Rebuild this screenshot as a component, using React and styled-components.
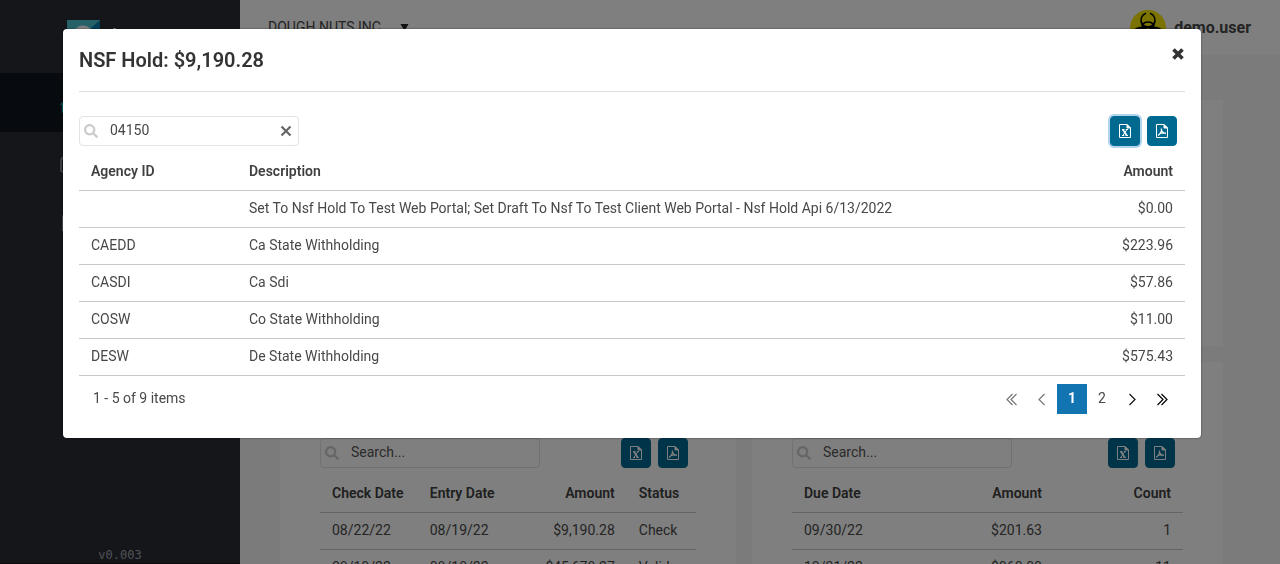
import React from "react";
import styled, { createGlobalStyle, css } from "styled-components";
import { FaSearch } from "react-icons/fa";

const GlobalStyle = createGlobalStyle`
  *, *::before, *::after { box-sizing: border-box; }
  body {
    margin: 0;
    font-family: Roboto, "Liberation Sans", sans-serif;
    font-size: 14px;
    line-height: 20px;
    color: #484848;
    background: #f6f6f6;
  }
  button, input { font: inherit; color: inherit; }
`;

const Shell = styled.div`
  display: flex;
  height: 100vh;
  overflow: hidden;
`;

const Sidebar = styled.aside`
  flex: none;
  width: 240px;
  display: flex;
  flex-direction: column;
  background: #2a2c34;
  color: #a0a4ac;
  border-bottom: 1px solid #1c0f18;
`;

const Brand = styled.div`
  display: flex;
  gap: 11px;
  height: 73px;
  padding: 20px 0 0 67px;
  color: #fff;
  font-size: 24px;
  line-height: 32px;
`;

const Nav = styled.nav`
  flex: 1;
  display: flex;
  flex-direction: column;
`;

const NavLink = styled.a`
  display: flex;
  align-items: center;
  height: 59px;
  padding: 4px 0 0 60px;
  text-decoration: none;
  color: ${(p) => (p.$active ? "#00b5c8" : "#a0a4ac")};
  background: ${(p) => (p.$active ? "#0e141e" : "transparent")};
`;

const Version = styled.footer`
  text-align: center;
  font: 12px/16px "DejaVu Sans Mono", monospace;
`;

const Content = styled.div`
  flex: 1;
  min-width: 0;
`;

const TopBar = styled.header`
  display: flex;
  align-items: center;
  justify-content: space-between;
  height: 55px;
  padding: 0 29px 0 28px;
  background: #fff;
`;

const Company = styled.button`
  display: flex;
  align-items: center;
  gap: 15px;
  padding: 0 0 2px;
  border: 0;
  background: none;
`;

const User = styled.div`
  display: flex;
  align-items: center;
  gap: 8px;
  font-size: 16px;
  font-weight: 700;
`;

const Avatar = styled.span`
  display: grid;
  place-items: center;
  width: 36px;
  height: 36px;
  border-radius: 50%;
  background: #f5e600;
  color: #000;
`;

const Main = styled.main`
  display: grid;
  grid-template-columns: 456fr 471fr;
  gap: 16px;
  padding: 45px 57px 0 40px;
`;

const Panel = styled.section`
  height: ${(p) => (p.$wide ? "246px" : "400px")};
  grid-column: ${(p) => (p.$wide ? "1 / -1" : "auto")};
  padding: 76px 40px 0;
  background: #fff;
`;

const Toolbar = styled.div`
  display: flex;
  align-items: center;
  justify-content: space-between;
  padding-right: 8px;
`;

const SearchBox = styled.label`
  display: flex;
  align-items: center;
  width: 220px;
  height: 30px;
  padding: 0 6px 0 4px;
  border: 1px solid #e3e3e3;
  border-radius: 4px;
  color: #ccc;
`;

const SearchInput = styled.input`
  flex: 1;
  min-width: 0;
  height: 28px;
  padding: 0 0 2px;
  margin-left: 12px;
  border: 0;
  outline: 0;
  background: none;
  color: #484848;
  &::placeholder { color: #555; opacity: 1; }
`;

const IconButton = styled.button`
  display: grid;
  place-items: center;
  padding: 0;
  border: 0;
  background: none;
  color: ${(p) => p.$color || "#666"};
`;

const Exports = styled.div`
  display: flex;
  gap: 7px;
`;

const ExportButton = styled.button`
  display: grid;
  place-items: center;
  width: 30px;
  height: 30px;
  padding: 0;
  border: 1px solid #006b95;
  border-radius: 4px;
  background: #006990;
  color: #fff;
  ${(p) => p.$focused && css`box-shadow: 0 0 0 2px #b3d4ea;`}
`;

const Table = styled.table`
  width: 100%;
  margin-top: 7px;
  border-collapse: collapse;
  table-layout: fixed;
`;

const Cell = styled.td`
  height: 37px;
  padding: 0 12px 2px;
  border-bottom: 1px solid #c8c8c8;
  text-align: ${(p) => (p.$right ? "right" : "left")};
  white-space: nowrap;
`;

const HeadCell = styled(Cell).attrs({ as: "th", scope: "col" })`
  padding: 0 12px;
  font-weight: 600;
  color: #404040;
`;

const Overlay = styled.div`
  position: fixed;
  inset: 0;
  padding: 29px 79px 0 63px;
  background: rgba(0, 0, 0, 0.5);
`;

const Dialog = styled.section`
  padding: 0 16px 24px;
  border-radius: 4px;
  background: #fff;
  box-shadow: 0 0 2px rgba(0, 0, 0, 0.6);
`;

const DialogHead = styled.header`
  display: flex;
  align-items: flex-start;
  justify-content: space-between;
  height: 63px;
  padding-top: 18px;
  margin-bottom: 24px;
  border-bottom: 1px solid #ddd;
`;

const Title = styled.h2`
  margin: 0;
  font-size: 20px;
  line-height: 26px;
  font-weight: 600;
  color: #333;
`;

const Pager = styled.footer`
  display: flex;
  align-items: flex-start;
  justify-content: space-between;
  padding: 8px 8px 0 14px;
  line-height: 28px;
`;

const Pages = styled.nav`
  display: flex;
`;

const PageButton = styled.button`
  display: flex;
  justify-content: center;
  width: 30px;
  height: 30px;
  padding: 0;
  border: 0;
  color: ${(p) => (p.$current ? "#fff" : p.$color || "#484848")};
  font-weight: ${(p) => (p.$current ? 700 : 400)};
  background: ${(p) => (p.$current ? "#1274b0" : "none")};
  svg { align-self: center; }
`;

const Arrow = ({ double, flip }) => (
  <svg width="14" height="14" viewBox="0 0 14 14" fill="none" stroke="currentColor" strokeWidth="1.200" aria-hidden="true">
    <g transform={flip ? "matrix(-1 0 0 1 14 0)" : undefined}>
      {double ? <path d="M2.500 2l5.500 5.500L2.500 13M6.500 2l5.500 5.500L6.500 13" /> : <path d="M4.500 2L10 7.500 4.500 13" />}
    </g>
  </svg>
);

const Logo = () => (
  <svg width="33" height="33" viewBox="0 0 33 33" aria-hidden="true">
    <path fill="#4cc3cf" d="M0 0h33v33H0z" />
    <path fill="#0b7fae" d="M33 0v33H8L24 8z" />
    <circle cx="16" cy="16" r="8" fill="none" stroke="#fff" strokeWidth="5" />
  </svg>
);

const NavIcon = ({ d }) => (
  <svg width="18" height="18" viewBox="0 0 18 18" fill="none" stroke="currentColor" strokeWidth="1.300" strokeLinejoin="round" aria-hidden="true">
    <path d={d} />
  </svg>
);

const Biohazard = () => (
  <svg width="32" height="32" viewBox="0 0 32 32" fill="none" stroke="currentColor" aria-hidden="true">
    <g strokeWidth="1.500" strokeLinecap="round">
      <path d="M13.500 1.500a7 7 0 1 0 5 0" />
      <path d="M13.500 1.500a7 7 0 1 0 5 0" transform="rotate(120 16 18)" />
      <path d="M13.500 1.500a7 7 0 1 0 5 0" transform="rotate(240 16 18)" />
    </g>
    <g fill="currentColor" stroke="none">
      <path d="M9.200 8.500c.5 8 13.100 8 13.600 0 1.200 4.500-1 8.500-6.800 9-5.800-.5-8-4.500-6.800-9z" />
      <path d="M9.200 8.500c.5 8 13.100 8 13.600 0 1.200 4.500-1 8.500-6.800 9-5.800-.5-8-4.500-6.800-9z" transform="rotate(120 16 18)" />
      <path d="M9.200 8.500c.5 8 13.100 8 13.600 0 1.200 4.500-1 8.500-6.800 9-5.800-.5-8-4.500-6.800-9z" transform="rotate(240 16 18)" />
    </g>
    <path strokeWidth="1.600" d="M10.500 12.200a8 8 0 0 1 11 0" />
    <circle cx="16" cy="18" r="1.800" fill="#f5e600" stroke="none" />
  </svg>
);

const Caret = () => (
  <svg width="9" height="8" viewBox="0 0 9 8" fill="#222" aria-hidden="true">
    <path d="M.5 1h8l-4 7z" />
  </svg>
);

const CloseIcon = () => (
  <svg width="14" height="14" viewBox="0 0 14 14" stroke="currentColor" strokeWidth="3.600" aria-hidden="true">
    <path d="M2.500 2.500l9 9M11.500 2.500l-9 9" />
  </svg>
);

const ClearIcon = () => (
  <svg width="12" height="12" viewBox="0 0 12 12" stroke="currentColor" strokeWidth="2.200" aria-hidden="true">
    <path d="M1.500 1.500l9 9M10.500 1.500l-9 9" />
  </svg>
);

const ExcelIcon = () => (
  <svg width="14" height="14" viewBox="0 0 14 14" fill="none" stroke="currentColor" aria-hidden="true">
    <path d="M1.500.500H9L12.500 4v9.500h-11z" />
    <path fill="currentColor" d="M9 .500V4h3.500z" />
    <path strokeWidth="1.700" d="M4.800 5.500l4 6" />
    <path d="M9 5.500l-4.200 6M4 5.500h2.500M7.800 5.500H10M4 11.500h2.200M7.500 11.500H10" />
  </svg>
);

const PdfIcon = () => (
  <svg width="14" height="14" viewBox="0 0 14 14" fill="none" stroke="currentColor" aria-hidden="true">
    <path d="M1.500.500H9L12.500 4v9.500h-11z" />
    <path fill="currentColor" d="M9 .500V4h3.500z" />
    <path strokeWidth="1.200" d="M6.300 4.500c-.2 2.200.8 4.300 4.700 5M6.500 4.500c.3 2.500-1.300 5.500-3.500 7M4.500 9.800c1.800-.8 4-1 6.500-.6" />
  </svg>
);

const Search = ({ value, onClear }) => (
  <SearchBox>
    <FaSearch size={14} />
    <SearchInput aria-label="Search" placeholder="Search..." defaultValue={value} />
    {onClear && (
      <IconButton type="button" aria-label="Clear search"><ClearIcon /></IconButton>
    )}
  </SearchBox>
);

const TableTools = ({ value, focused }) => (
  <Toolbar>
    <Search value={value} onClear={Boolean(value)} />
    <Exports>
      <ExportButton type="button" aria-label="Export to Excel" $focused={focused}><ExcelIcon /></ExportButton>
      <ExportButton type="button" aria-label="Export to PDF"><PdfIcon /></ExportButton>
    </Exports>
  </Toolbar>
);

const DataTable = ({ columns, rows }) => (
  <Table>
    <colgroup>
      {columns.map((c) => <col key={c.name} width={c.width} />)}
    </colgroup>
    <thead>
      <tr>{columns.map((c) => <HeadCell key={c.name} $right={c.right}>{c.name}</HeadCell>)}</tr>
    </thead>
    <tbody>
      {rows.map((row, i) => (
        <tr key={i}>{row.map((v, j) => <Cell key={j} $right={columns[j].right}>{v}</Cell>)}</tr>
      ))}
    </tbody>
  </Table>
);

const navItems = [
  { name: "Home", d: "M2.500 8.500v7.500h13V8.500M.6 8.700L9 1.500l8.400 7.200", active: true },
  { name: "Security", d: "M3 6h12a2 2 0 0 1 2 2v7a2 2 0 0 1-2 2H3a2 2 0 0 1-2-2V6.500C1 4 2 2.500 4 2h8" },
  { name: "Reports", d: "M2.700 2h9l4 4v10.500h-13zM6 8h6M6 12h6" },
];

const holdColumns = [
  { name: "Agency ID", width: "158" },
  { name: "Description" },
  { name: "Amount", width: "160", right: true },
];
const holdRows = [
  ["", "Set To Nsf Hold To Test Web Portal; Set Draft To Nsf To Test Client Web Portal - Nsf Hold Api 6/13/2022", "$0.00"],
  ["CAEDD", "Ca State Withholding", "$223.96"],
  ["CASDI", "Ca Sdi", "$57.86"],
  ["COSW", "Co State Withholding", "$11.00"],
  ["DESW", "De State Withholding", "$575.43"],
];
const checkColumns = [
  { name: "Check Date", width: "26%" },
  { name: "Entry Date", width: "26%" },
  { name: "Amount", width: "29.600%", right: true },
  { name: "Status" },
];
const checkRows = [
  ["08/22/22", "08/19/22", "$9,190.28", "Check"],
  ["08/19/22", "08/18/22", "$45,678.27", "Valid"],
];
const dueColumns = [
  { name: "Due Date", width: "33%" },
  { name: "Amount", width: "34%", right: true },
  { name: "Count", right: true },
];
const dueRows = [
  ["09/30/22", "$201.63", "1"],
  ["10/31/22", "$960.00", "11"],
];

export default function App() {
  return (
    <>
      <GlobalStyle />
      <Shell>
        <Sidebar>
          <Brand><Logo />t</Brand>
          <Nav>
            {navItems.map((n) => (
              <NavLink key={n.name} href={`#${n.name.toLowerCase()}`} aria-label={n.name} $active={n.active}>
                <NavIcon d={n.d} />
              </NavLink>
            ))}
          </Nav>
          <Version>v0.003</Version>
        </Sidebar>
        <Content>
          <TopBar>
            <Company type="button">DOUGH NUTS INC. <Caret /></Company>
            <User><Avatar><Biohazard /></Avatar>demo.user</User>
          </TopBar>
          <Main>
            <Panel $wide />
            <Panel>
              <TableTools />
              <DataTable columns={checkColumns} rows={checkRows} />
            </Panel>
            <Panel>
              <TableTools />
              <DataTable columns={dueColumns} rows={dueRows} />
            </Panel>
          </Main>
        </Content>
      </Shell>
      <Overlay>
        <Dialog role="dialog" aria-modal="true" aria-labelledby="hold-title">
          <DialogHead>
            <Title id="hold-title">NSF Hold: $9,190.28</Title>
            <IconButton type="button" aria-label="Close" $color="#333"><CloseIcon /></IconButton>
          </DialogHead>
          <TableTools value="04150" focused />
          <DataTable columns={holdColumns} rows={holdRows} />
          <Pager>
            <span>1 - 5 of 9 items</span>
            <Pages aria-label="Pages">
              <PageButton type="button" aria-label="First page" $color="#777"><Arrow double flip /></PageButton>
              <PageButton type="button" aria-label="Previous page" $color="#777"><Arrow flip /></PageButton>
              <PageButton type="button" aria-current="page" $current>1</PageButton>
              <PageButton type="button">2</PageButton>
              <PageButton type="button" aria-label="Next page" $color="#111"><Arrow /></PageButton>
              <PageButton type="button" aria-label="Last page" $color="#000"><Arrow double /></PageButton>
            </Pages>
          </Pager>
        </Dialog>
      </Overlay>
    </>
  );
}
